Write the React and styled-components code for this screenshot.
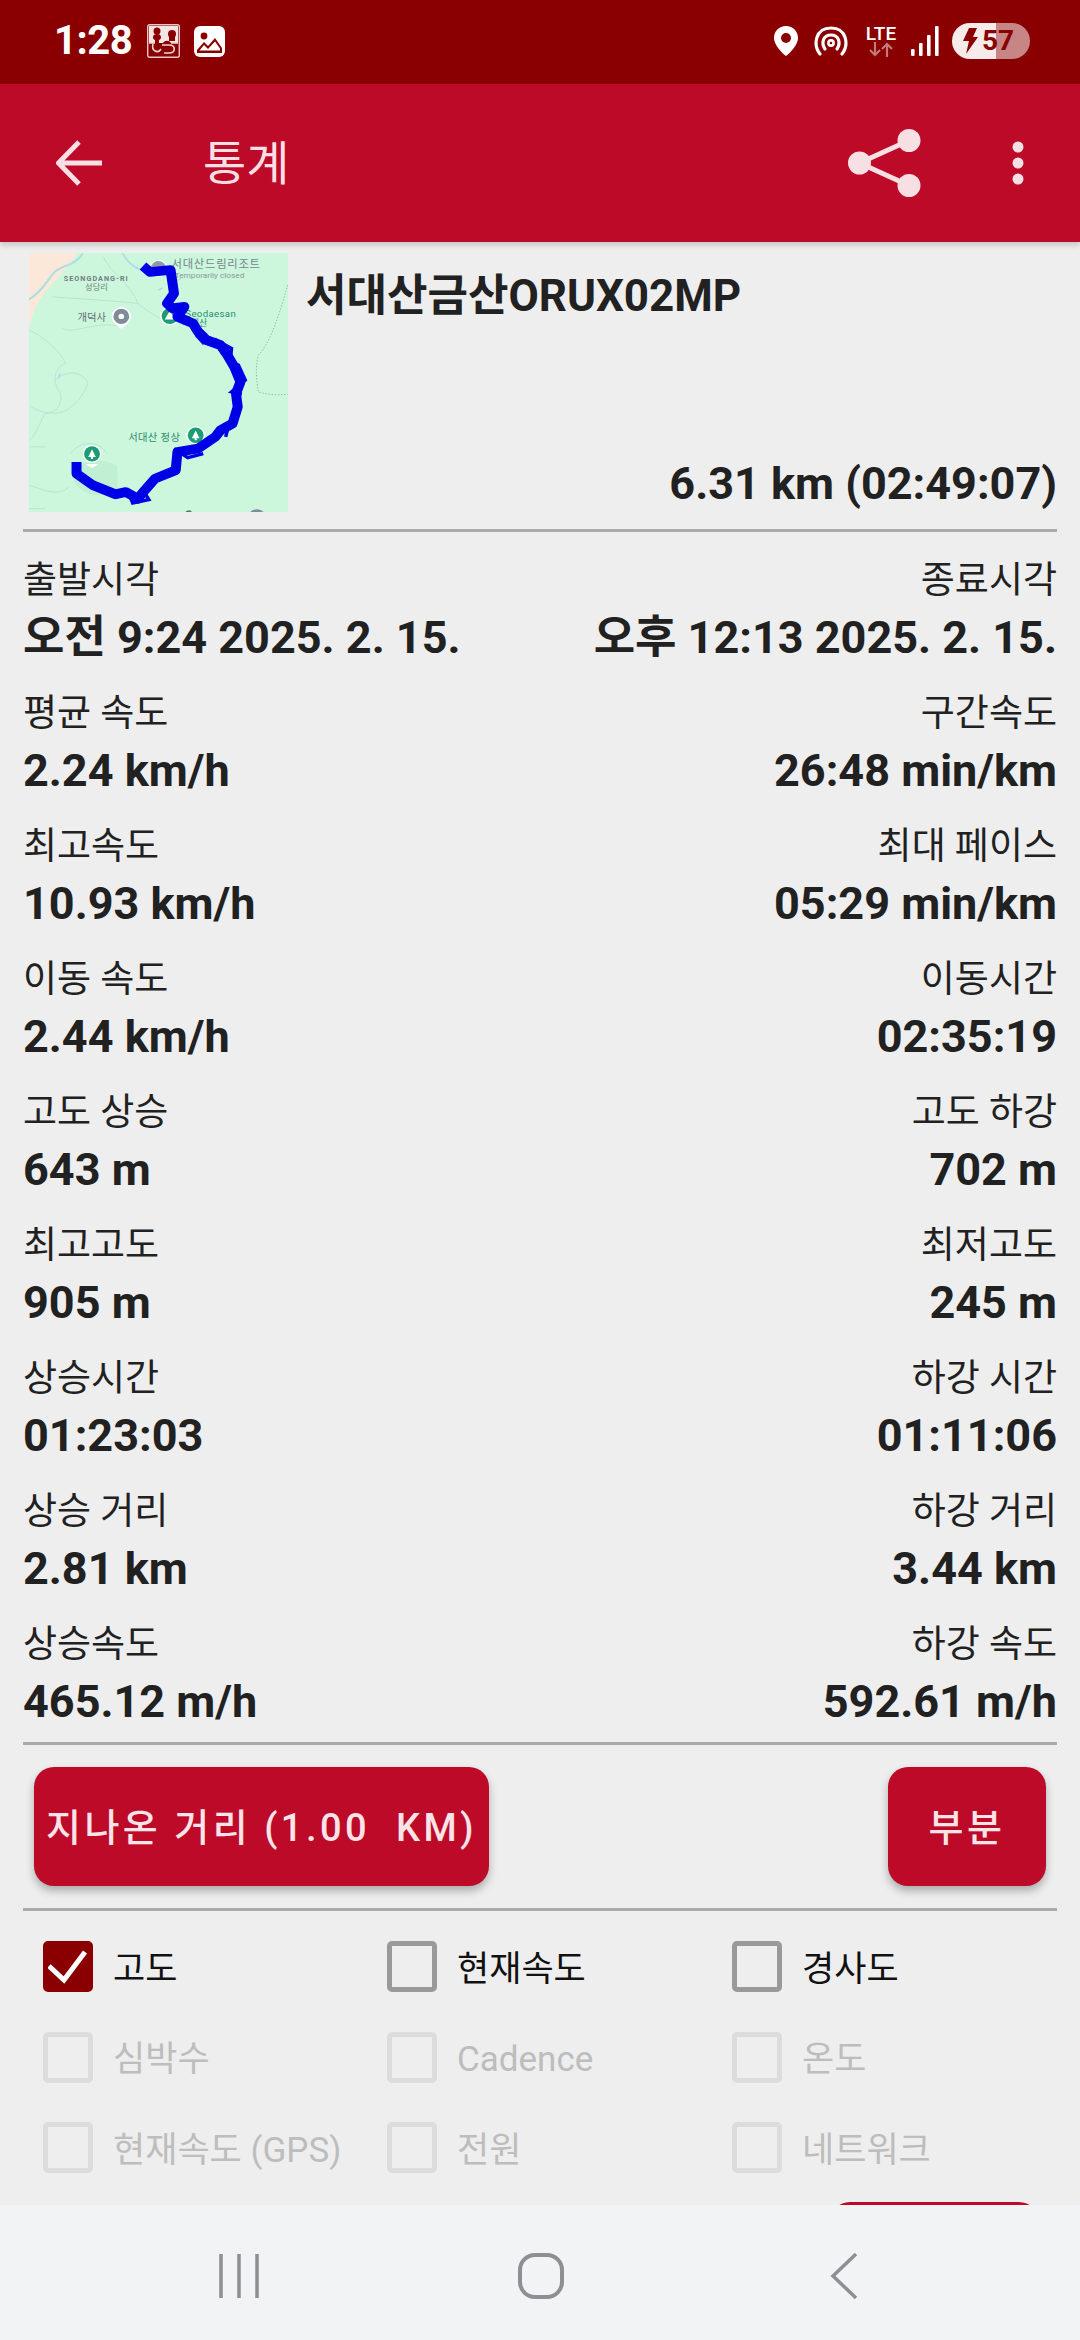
import React from "react";
import styled, { createGlobalStyle } from "styled-components";

const FONT = `Roboto, "Noto Sans CJK KR", "Noto Sans", sans-serif`;

const Global = createGlobalStyle`
  html, body { margin: 0; padding: 0; background: #eeeeee; }
  * { box-sizing: border-box; }
  body { font-family: ${FONT}; }
`;

const Page = styled.div`
  width: 1080px; height: 2340px; display: flex; flex-direction: column;
  overflow: hidden; background: #eeeeee; color: #212121;
`;

const StatusBar = styled.div`
  height: 84px; flex: none; background: #8a0000; display: flex; align-items: center;
  padding: 0 50px 2px 54px; color: #fff;
`;
const Clock = styled.span`
  font-size: 40px; font-weight: 700; width: 79px; letter-spacing: -0.5px; line-height: 1; white-space: nowrap;
`;
const StatusLeft = styled.div`display: flex; align-items: center; gap: 14px; flex: 1;`;
const StatusRight = styled.div`display: flex; align-items: center; gap: 16px;`;
const Lte = styled.div`
  width: 34px; margin-right: -3px; display: flex; flex-direction: column; align-items: center;
  font-size: 19px; font-weight: 500; line-height: 17px;
`;
const Signal = styled.div`display: flex; margin-right: -3px;`;
const Battery = styled.div`
  width: 78px; height: 36px; border-radius: 18px; display: flex; align-items: center;
  background: linear-gradient(90deg, #f6eaea 0 44px, #c78585 44px 100%);
  color: #8a0000; font-size: 28px; font-weight: 700; padding-left: 10px; gap: 4px; line-height: 1;
`;

const Toolbar = styled.header`
  height: 158px; flex: none; background: #bc0a28; display: flex; align-items: center;
  padding: 0 56px; color: #fbdfe4; box-shadow: 0 3px 6px rgba(0,0,0,.18); position: relative; z-index: 1;
`;
const Title = styled.h1`
  margin: 0 0 0 101px; flex: 1; font-size: 47px; font-weight: 400; line-height: 1;
`;
const Actions = styled.div`display: flex; align-items: center; gap: 91px;`;

const Main = styled.main`flex: 1; min-height: 0; overflow: hidden; padding: 11px 23px 0;`;

const Summary = styled.section`
  display: flex; height: 279px; padding-bottom: 17px; border-bottom: 3px solid #aaaaaa;
`;
const MapBox = styled.div`
  width: 259px; height: 259px; margin-left: 6px; flex: none; overflow: hidden;
  svg { display: block; }
`;
const SummaryText = styled.div`
  flex: 1; display: flex; flex-direction: column; justify-content: space-between; padding: 18px 0 3px 18px;
`;
const TrackName = styled.div`font-size: 44px; font-weight: 700; line-height: 50px;`;
const TrackDistance = styled.div`font-size: 45px; font-weight: 700; text-align: right; line-height: 50px;`;

const Stats = styled.section`
  display: grid; grid-template-columns: 1fr 1fr; grid-auto-rows: 133px;
  padding: 21px 0 0; height: 1213px; border-bottom: 3px solid #aaaaaa;
`;
const Stat = styled.div`
  text-align: ${p => (p.$right ? "right" : "left")}; white-space: nowrap;
`;
const StatLabel = styled.div`font-size: 37px; line-height: 55px;`;
const StatValue = styled.div`font-size: 45px; font-weight: 700; line-height: 60px;`;

const Buttons = styled.section`
  display: flex; justify-content: space-between; padding: 22px 11px 0; height: 166px;
  border-bottom: 3px solid #aaaaaa;
`;
const Button = styled.button`
  height: 119px; border: 0; border-radius: 20px; background: #bc0a28; color: #fbe3e7;
  font-family: ${FONT}; font-size: 38px; font-weight: 500; letter-spacing: 3.5px; white-space: pre;
  padding: 0 0 4px; width: ${p => p.$w}px; box-shadow: 0 5px 8px rgba(0,0,0,.28);
`;

const Checks = styled.section`
  display: grid; grid-template-columns: 344px 345px 1fr; grid-template-rows: repeat(3, 90.5px);
  padding: 30px 0 0 20px; height: 291px;
`;
const CheckItem = styled.label`
  display: flex; align-items: center; gap: 20px; height: 51px;
  font-size: 35px; line-height: 1; white-space: nowrap;
  color: ${p => (p.$off ? "#bdbdbd" : "#111111")};
`;
const CheckText = styled.span`padding-top: 5px;`;
const Box = styled.span`
  width: 50px; height: 51px; flex: none; border-radius: 5px; display: flex;
  border: 5px solid ${p => (p.$off ? "#dcdcdc" : "#999999")};
  ${p => p.$on && "background:#8a0000;border-color:#8a0000;"}
`;
const Peek = styled.div`
  width: 209px; height: 40px; margin-left: 807px; background: #bc0a28; border-radius: 20px;
`;

const NavBar = styled.nav`
  height: 135px; flex: none; background: #f2f3f5; position: relative; z-index: 1;
  display: grid; grid-template-columns: 219px 40px 259px 46px 266px 28px; align-items: center;
  padding-top: 7px;
`;
const NavSlot = styled.div`grid-column: ${p => p.$col}; display: flex;`;

const stats = [
  ["출발시각", "오전 9:24 2025. 2. 15.", "종료시각", "오후 12:13 2025. 2. 15."],
  ["평균 속도", "2.24 km/h", "구간속도", "26:48 min/km"],
  ["최고속도", "10.93 km/h", "최대 페이스", "05:29 min/km"],
  ["이동 속도", "2.44 km/h", "이동시간", "02:35:19"],
  ["고도 상승", "643 m", "고도 하강", "702 m"],
  ["최고고도", "905 m", "최저고도", "245 m"],
  ["상승시간", "01:23:03", "하강 시간", "01:11:06"],
  ["상승 거리", "2.81 km", "하강 거리", "3.44 km"],
  ["상승속도", "465.12 m/h", "하강 속도", "592.61 m/h"],
];

const checks = [
  ["고도", "on"], ["현재속도", ""], ["경사도", ""],
  ["심박수", "off"], ["Cadence", "off"], ["온도", "off"],
  ["현재속도 (GPS)", "off"], ["전원", "off"], ["네트워크", "off"],
];

const ROUTE = "M415 78 L435 96 L495 90 L505 160 L485 190 L500 205 L535 200 L515 230 L560 250 L575 275 L600 300 L640 315 L660 345 L680 380 L698 425 L685 460 L690 500 L675 550 L640 570 L625 590 L575 625 L515 635 L510 690 L450 715 L420 750 L400 775 L365 755 L335 762 L270 735 L222 700 L222 665";
const ROUTE_JAG = "M570 285 L590 308 L625 298 L672 325 L668 365 L692 375 L712 420 L672 455 L702 462 M630 572 L665 550 L655 590 M505 625 L545 652 L590 640 M412 745 L432 778 L385 788 L375 762";

function TreePin({ x, y }) {
  return (
    <g>
      <path d={`M${x - 19} ${y + 30} L${x} ${y + 42} L${x + 19} ${y + 30} Z`} fill="#fff" />
      <circle cx={x} cy={y} r="27" fill="#fff" />
      <circle cx={x} cy={y} r="23" fill="#1c9c74" />
      <path d={`M${x} ${y - 14} L${x + 11} ${y + 9} H${x + 3} V${y + 15} H${x - 3} V${y + 9} H${x - 11} Z`} fill="#fff" />
    </g>
  );
}

function MapThumb() {
  return (
    <svg width="259" height="259" viewBox="84 39 752 776" preserveAspectRatio="none">
      <rect x="84" y="39" width="752" height="776" fill="#ccf7dc" />
      <path d="M84 39 H225 C200 80 150 130 125 165 C105 190 90 230 84 265 Z" fill="#fbe8d8" />
      <path d="M84 178 C130 150 140 110 165 90 C190 75 225 70 240 40" fill="none" stroke="#a9dfe4" strokeWidth="6" />
      <path d="M355 40 C370 65 385 80 405 88 M500 130 L525 115 M460 150 L472 144 M170 415 L174 400" fill="none" stroke="#a9dfe4" strokeWidth="5" />
      <g fill="none" stroke="#b3e0d4" strokeWidth="2.5">
        <path d="M150 170 C210 175 300 180 400 190 C430 215 460 235 480 240 M300 50 C320 100 380 130 400 190 M84 270 C130 290 180 340 190 370 C160 380 150 420 170 450 C190 490 160 520 130 520 C110 560 100 590 84 600" />
        <path d="M160 420 C190 390 240 390 255 430 C240 470 220 490 205 500 C180 530 120 520 90 500 M84 620 H130 M205 640 C230 600 290 600 310 640 M84 735 C130 750 170 770 200 740 M84 805 H130 M180 265 C210 285 280 240 350 260" />
      </g>
      <path d="M210 710 C200 680 270 640 340 675 L342 740 C300 780 230 770 210 710 Z" fill="#bff0d4" />
      <path d="M835 135 C815 210 785 310 750 345 C740 380 745 430 750 455 C780 465 810 465 835 462" fill="none" stroke="#8fa8a0" strokeWidth="2.5" strokeDasharray="4 5" />
      <g fontFamily={`Roboto, "Noto Sans CJK KR", sans-serif`}>
        <circle cx="460" cy="85" r="26" fill="#fff" />
        <circle cx="460" cy="85" r="22" fill="#8d9aa6" />
        <text x="498" y="85" fontSize="33" fill="#78868f" letterSpacing="2">서대산드림리조트</text>
        <text x="507" y="113" fontSize="24" fill="#8b979b">Temporarily closed</text>
        <text x="185" y="124" fontSize="21" fontWeight="700" fill="#6f7d85" letterSpacing="3">SEONGDANG-RI</text>
        <text x="247" y="150" fontSize="24" fill="#6f7d85">성당리</text>
        <text x="225" y="243" fontSize="30" fill="#5f6f75">개덕사</text>
        <path d="M332 250 L352 266 L372 250 Z" fill="#fff" />
        <circle cx="352" cy="229" r="28" fill="#fff" />
        <circle cx="352" cy="229" r="23" fill="#7f8d99" />
        <circle cx="352" cy="229" r="8" fill="#fff" />
        <circle cx="493" cy="228" r="26" fill="#1c9c74" stroke="#fff" strokeWidth="4" />
        <path d="M493 212 L508 238 H478 Z" fill="#fff" />
        <text x="538" y="231" fontSize="28" fill="#1f8f73" letterSpacing="1">Seodaesan</text>
        <text x="530" y="258" fontSize="26" fill="#1f8f73">서대산</text>
        <text x="372" y="601" fontSize="30" fill="#2f8a70" letterSpacing="1">서대산 정상</text>
        <TreePin x={568} y={585} />
        <TreePin x={267} y={641} />
      </g>
      <circle cx="548" cy="820" r="10" fill="#5f6f75" />
      <circle cx="746" cy="835" r="28" fill="#7f8d99" />
      <path d={ROUTE} fill="none" stroke="#0000e6" strokeWidth="29" strokeLinejoin="round" strokeLinecap="butt" />
      <path d={ROUTE_JAG} fill="none" stroke="#0000e6" strokeWidth="10" strokeLinejoin="miter" />
    </svg>
  );
}

const Puzzle = () => (
  <svg width="33" height="34" viewBox="0 0 33 34" fill="none">
    <rect x="0.7" y="0.7" width="31.6" height="32.6" rx="2" stroke="#e8c8c8" strokeWidth="1.4" />
    <path d="M2 2 H31 V19 H24 C22 16 18 16 16 19 H12 V16 C15 15 15 10 10 10 C5 10 5 15 8 16 V19 H2 Z" fill="#f5e4e4" />
    <circle cx="10" cy="7" r="3.500" fill="#8a0000" />
    <circle cx="25" cy="10" r="4" fill="#8a0000" />
    <path d="M22 12 H28 V17 H22 Z" fill="#8a0000" />
    <path d="M6 20 C4 27 11 30 14 25 M15 21 H22 C29 21 29 29 22 29 H17 M2 19 H8 M24 19 H31" stroke="#f0d4d4" strokeWidth="1.6" />
  </svg>
);
const ImageIcon = () => (
  <svg width="31" height="31" viewBox="0 0 31 31">
    <rect width="31" height="31" rx="6" fill="#fff" />
    <circle cx="10" cy="10" r="3.400" fill="#8a0000" />
    <path d="M3 27 V24 L10 16 L14 20 L21 12 L28 22 V27 Z" fill="#8a0000" />
    <path d="M5.500 24.500 L10 19 L14 23 L21 15.500 L26 22.500 V24.500 Z" fill="#fff" />
  </svg>
);
const Pin = () => (
  <svg width="24" height="30" viewBox="0 0 24 30">
    <path fillRule="evenodd" d="M12 0 C5 0 0 5 0 12 C0 19 8 27 12 30 C16 27 24 19 24 12 C24 5 19 0 12 0 Z M12 7 A5 5 0 1 1 12 17 A5 5 0 1 1 12 7 Z" fill="#fff" />
  </svg>
);
const Hotspot = () => (
  <svg width="34" height="30" viewBox="0 0 34 30" fill="none" stroke="#fff" strokeWidth="3.200" strokeLinecap="round">
    <path d="M6 28 C-1 19 1 2 17 2 C33 2 35 19 28 28" />
    <path d="M11 23 C7 17 9 9 17 9 C25 9 27 17 23 23" />
    <circle cx="17" cy="17" r="2.600" strokeWidth="2.600" />
  </svg>
);
const DataArrows = () => (
  <svg width="24" height="15" viewBox="0 0 24 15" fill="none" stroke="#c27a7a" strokeWidth="2.200">
    <path d="M6 0 V13 M1 8 L6 13 L11 8 M18 15 V2 M13 7 L18 2 L23 7" />
  </svg>
);
const SignalBars = () => (
  <svg width="28" height="30" viewBox="0 0 28 30" fill="#fff">
    <rect x="0" y="23" width="3.600" height="7" rx="1.200" />
    <rect x="8" y="17" width="3.600" height="13" rx="1" />
    <rect x="16" y="9" width="3.600" height="21" rx="1" />
    <rect x="24" y="0" width="3.600" height="30" rx="1" />
  </svg>
);
const Bolt = () => (
  <svg width="16" height="26" viewBox="0 0 16 26">
    <path d="M7 0 H15 L11 9 H16 L4 26 L7 13 H1 Z" fill="#8a0000" />
  </svg>
);
const BackArrow = () => (
  <svg width="46" height="46" viewBox="0 0 46 46" fill="none" stroke="#fbdfe4" strokeWidth="5">
    <path d="M46 23 H3 M23 2 L2.500 23 L23 44" />
  </svg>
);
const ShareIcon = () => (
  <svg width="73" height="68" viewBox="0 0 73 68" fill="#f7dfe3">
    <circle cx="11.500" cy="34" r="11.500" />
    <circle cx="61" cy="11.500" r="11.500" />
    <circle cx="61" cy="56.500" r="11.500" />
    <path d="M11.500 34 L61 11.500 M11.500 34 L61 56.500" stroke="#f7dfe3" strokeWidth="5" />
  </svg>
);
const Dots = () => (
  <svg width="12" height="44" viewBox="0 0 12 44" fill="#f7dfe3">
    <circle cx="6" cy="6" r="5.500" />
    <circle cx="6" cy="22" r="5.500" />
    <circle cx="6" cy="38" r="5.500" />
  </svg>
);
const Check = () => (
  <svg width="40" height="41" viewBox="0 0 40 41" fill="none" stroke="#fff" strokeWidth="5">
    <path d="M1 20 L16 34 L37 6" />
  </svg>
);

export default function App() {
  return (
    <Page>
      <Global />
      <StatusBar>
        <StatusLeft>
          <Clock>1:28</Clock>
          <Puzzle />
          <ImageIcon />
        </StatusLeft>
        <StatusRight>
          <Pin />
          <Hotspot />
          <Lte>LTE<DataArrows /></Lte>
          <Signal><SignalBars /></Signal>
          <Battery><Bolt /><span>57</span></Battery>
        </StatusRight>
      </StatusBar>
      <Toolbar>
        <BackArrow />
        <Title>통계</Title>
        <Actions>
          <ShareIcon />
          <Dots />
        </Actions>
      </Toolbar>
      <Main>
        <Summary>
          <MapBox><MapThumb /></MapBox>
          <SummaryText>
            <TrackName>서대산금산ORUX02MP</TrackName>
            <TrackDistance>6.31 km (02:49:07)</TrackDistance>
          </SummaryText>
        </Summary>
        <Stats>
          {stats.map(([a, b, c, d]) => (
            <React.Fragment key={a}>
              <Stat><StatLabel>{a}</StatLabel><StatValue>{b}</StatValue></Stat>
              <Stat $right><StatLabel>{c}</StatLabel><StatValue>{d}</StatValue></Stat>
            </React.Fragment>
          ))}
        </Stats>
        <Buttons>
          <Button $w={455}>{"지나온 거리 (1.00  KM)"}</Button>
          <Button $w={158}>부분</Button>
        </Buttons>
        <Checks>
          {checks.map(([t, s]) => (
            <CheckItem key={t} $off={s === "off"}>
              <Box $on={s === "on"} $off={s === "off"}>{s === "on" && <Check />}</Box>
              <CheckText>{t}</CheckText>
            </CheckItem>
          ))}
        </Checks>
        <Peek />
      </Main>
      <NavBar>
        <NavSlot $col={2}>
          <svg width="40" height="44" viewBox="0 0 40 44" stroke="#8d8f92" strokeWidth="3.500"><path d="M2 0 V44 M20 0 V44 M38 0 V44" /></svg>
        </NavSlot>
        <NavSlot $col={4}>
          <svg width="46" height="46" viewBox="0 0 46 46" fill="none" stroke="#8d8f92" strokeWidth="4"><rect x="2" y="2" width="42" height="42" rx="15" /></svg>
        </NavSlot>
        <NavSlot $col={6}>
          <svg width="28" height="46" viewBox="0 0 28 46" fill="none" stroke="#8d8f92" strokeWidth="3.500"><path d="M26 1 L3 23 L26 45" /></svg>
        </NavSlot>
      </NavBar>
    </Page>
  );
}
